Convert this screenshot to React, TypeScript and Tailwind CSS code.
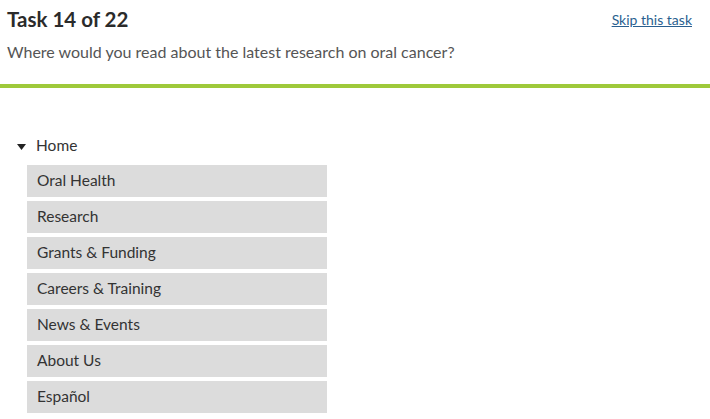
import React from "react";

const items = [
  "Oral Health",
  "Research",
  "Grants & Funding",
  "Careers & Training",
  "News & Events",
  "About Us",
  "Español",
];

const App = () => {
  return (
    <div
      className="w-[710px] h-[419px] bg-white overflow-hidden text-[#333]"
      style={{ fontFamily: "Lato, 'Open Sans', sans-serif" }}
    >
      <header className="px-[7px] pt-[6px] h-[84px]">
        <div className="flex items-start justify-between">
          <h1 className="text-[20.5px] font-bold leading-[26px] text-[#2b2b2b]">
            Task 14 of 22
          </h1>
          <a
            href="#"
            className="mt-[3px] mr-[11px] text-[14px] text-[#2a5f8f] underline"
          >
            Skip this task
          </a>
        </div>
        <p className="mt-[10px] text-[16px] leading-5 text-[#555]">
          Where would you read about the latest research on oral cancer?
        </p>
      </header>
      <div className="h-[4px] bg-[#9ec93a]" />

      <nav className="pt-[48px] pl-[17px]">
        <div className="flex items-center h-5 gap-[10px]">
          <svg width="9" height="6" viewBox="0 0 9 6" className="mt-[1px]">
            <path d="M0 0h9L4.5 6z" fill="#222" />
          </svg>
          <span className="text-[15.5px]">Home</span>
        </div>
        <ul className="mt-[9px] ml-[10px] flex flex-col gap-[4px]">
          {items.map((item) => (
            <li
              key={item}
              className="w-[300px] h-[32px] bg-[#dcdcdc] pl-[10px] flex items-center text-[15.5px] text-[#333]"
            >
              {item}
            </li>
          ))}
        </ul>
      </nav>
    </div>
  );
};

export default App;
